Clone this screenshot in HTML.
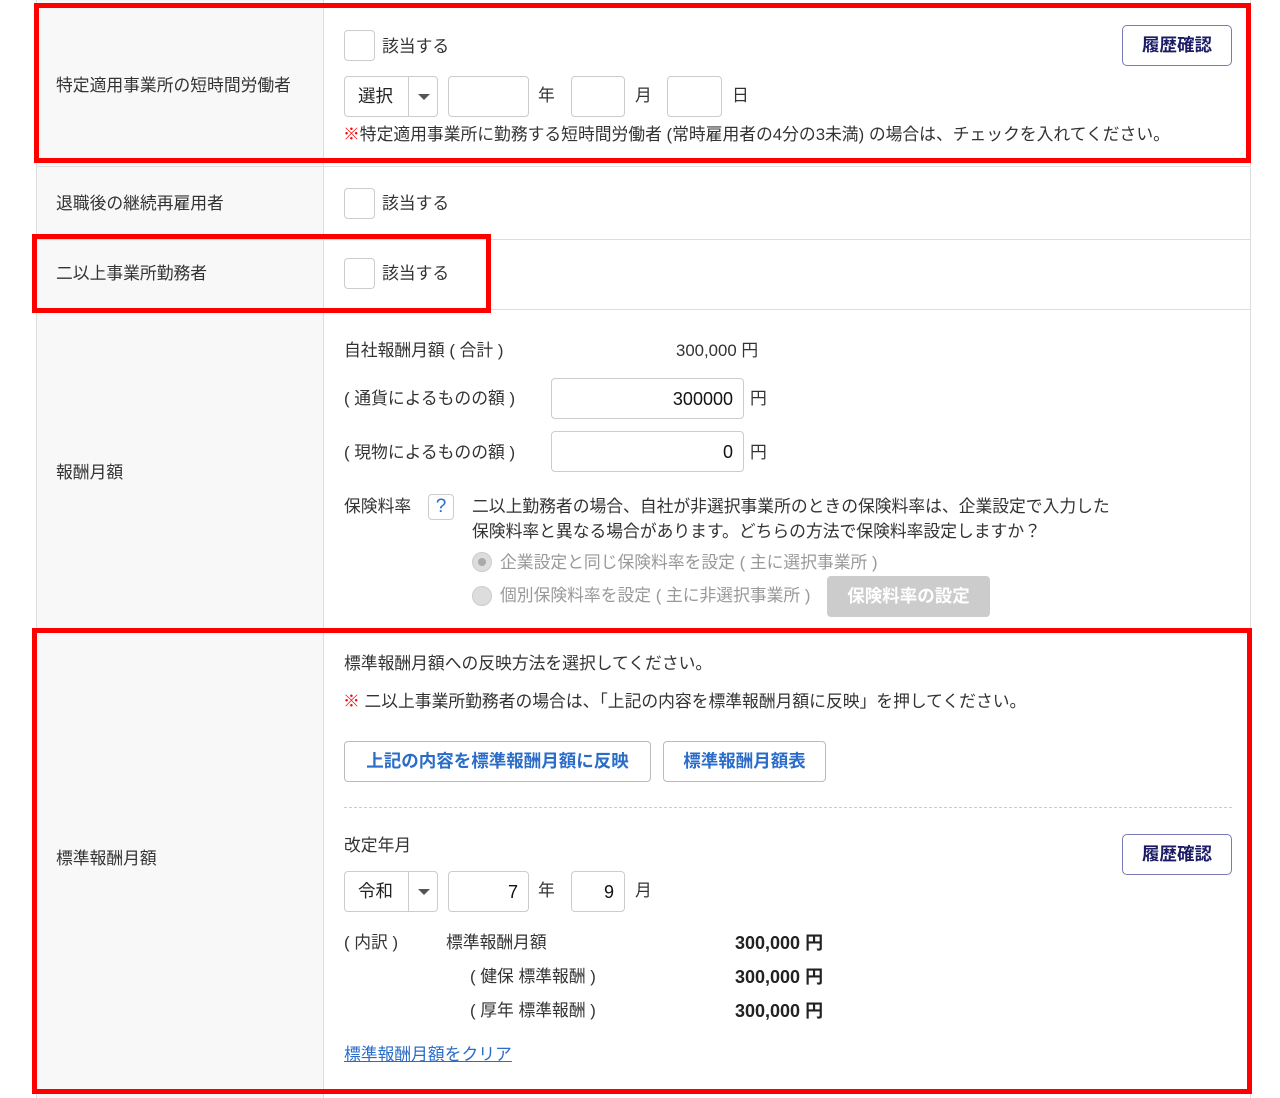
<!DOCTYPE html>
<html><head><meta charset="utf-8"><style>
*{box-sizing:border-box;margin:0;padding:0}
body{width:1280px;height:1098px;background:#fff;position:relative;overflow:hidden;font-family:"Liberation Sans","Noto Sans CJK JP",sans-serif;color:#333;font-size:16.8px}
.a{position:absolute;white-space:nowrap;line-height:20px;margin-top:2px}
.box{position:absolute;border:1px solid #ccc;border-radius:4px;background:#fff}
.hl{position:absolute;left:36px;width:1215px;height:1px;background:#ddd}
.red{position:absolute;border:5px solid #f00}
.num{text-align:right;padding-right:10px;font-size:18px;line-height:40px;color:#111}
.sel{position:absolute;border:1px solid #ccc;border-radius:4px;background:#fff;width:94px;height:41px}
.sel span{position:absolute;left:13px;top:8px;font-size:17.5px;line-height:22px;color:#222}
.sel i{position:absolute;left:63px;top:0;width:1px;height:39px;background:#ccc}
.sel b{position:absolute;left:73px;top:17px;border-left:6px solid transparent;border-right:6px solid transparent;border-top:6px solid #555}
.btn{position:absolute;border:1px solid #bbb;border-radius:4px;background:#fff;color:#2a6cc8;font-weight:bold;font-size:17.5px;text-align:center;line-height:38px}
.hist{position:absolute;border:1.5px solid #7a7ab8;border-radius:5px;background:#fff;color:#1b1b66;font-weight:bold;font-size:17.5px;text-align:center;line-height:38px;width:110px;height:41px;left:1122px}
.radio{position:absolute;width:20px;height:20px;border-radius:50%;background:#ddd;border:1px solid #ccc}
.v{font-weight:bold;font-size:18px;color:#222}
</style></head><body>
<div style="position:absolute;left:36px;top:0;width:287px;height:1098px;background:#f8f8f8"></div>
<div style="position:absolute;left:36px;top:0;width:1px;height:1098px;background:#ddd"></div>
<div style="position:absolute;left:323px;top:0;width:1px;height:1098px;background:#ddd"></div>
<div style="position:absolute;left:1250px;top:0;width:1px;height:1098px;background:#ddd"></div>
<div class="hl" style="top:166px"></div>
<div class="hl" style="top:239px"></div>
<div class="hl" style="top:309px"></div>
<div class="hl" style="top:629px"></div>

<div class="a" style="left:56px;top:74px">特定適用事業所の短時間労働者</div>
<div class="a" style="left:56px;top:192px">退職後の継続再雇用者</div>
<div class="a" style="left:56px;top:262px">二以上事業所勤務者</div>
<div class="a" style="left:56px;top:461px">報酬月額</div>
<div class="a" style="left:56px;top:847px">標準報酬月額</div>

<!-- row1 -->
<div class="box" style="left:344px;top:30px;width:31px;height:31px"></div>
<div class="a" style="left:382px;top:35px">該当する</div>
<div class="hist" style="top:25px">履歴確認</div>
<div class="sel" style="left:344px;top:76px"><span>選択</span><i></i><b></b></div>
<div class="box" style="left:448px;top:76px;width:81px;height:41px"></div>
<div class="a" style="left:538px;top:84px">年</div>
<div class="box" style="left:571px;top:76px;width:54px;height:41px"></div>
<div class="a" style="left:635px;top:84px">月</div>
<div class="box" style="left:667px;top:76px;width:55px;height:41px"></div>
<div class="a" style="left:732px;top:84px">日</div>
<div class="a" style="left:343px;top:123px"><span style="color:#f00">※</span>特定適用事業所に勤務する短時間労働者 (常時雇用者の4分の3未満) の場合は、チェックを入れてください。</div>

<!-- row2,3 -->
<div class="box" style="left:344px;top:188px;width:31px;height:31px"></div>
<div class="a" style="left:382px;top:192px">該当する</div>
<div class="box" style="left:344px;top:258px;width:31px;height:31px"></div>
<div class="a" style="left:382px;top:262px">該当する</div>

<!-- row4 -->
<div class="a" style="left:344px;top:339px">自社報酬月額 ( 合計 )</div>
<div class="a" style="left:676px;top:339px">300,000 円</div>
<div class="a" style="left:344px;top:387px">( 通貨によるものの額 )</div>
<div class="box num" style="left:551px;top:378px;width:193px;height:41px">300000</div>
<div class="a" style="left:750px;top:387px">円</div>
<div class="a" style="left:344px;top:441px">( 現物によるものの額 )</div>
<div class="box num" style="left:551px;top:431px;width:193px;height:41px">0</div>
<div class="a" style="left:750px;top:441px">円</div>
<div class="a" style="left:344px;top:495px">保険料率</div>
<div class="box" style="left:428px;top:494px;width:26px;height:26px;color:#2a6cc8;font-size:19px;text-align:center;line-height:24px">?</div>
<div class="a" style="left:472px;top:495px">二以上勤務者の場合、自社が非選択事業所のときの保険料率は、企業設定で入力した</div>
<div class="a" style="left:472px;top:520px">保険料率と異なる場合があります。どちらの方法で保険料率設定しますか？</div>
<div class="radio" style="left:472px;top:552px"><div style="position:absolute;left:5px;top:5px;width:8px;height:8px;border-radius:50%;background:#aaa"></div></div>
<div class="a" style="left:500px;top:551px;color:#999">企業設定と同じ保険料率を設定 ( 主に選択事業所 )</div>
<div class="radio" style="left:472px;top:586px"></div>
<div class="a" style="left:500px;top:584px;color:#999">個別保険料率を設定 ( 主に非選択事業所 )</div>
<div style="position:absolute;left:827px;top:576px;width:163px;height:41px;background:#ccc;border-radius:4px;color:#fff;font-weight:bold;font-size:17.5px;text-align:center;line-height:41px">保険料率の設定</div>

<!-- row5 -->
<div class="a" style="left:344px;top:652px">標準報酬月額への反映方法を選択してください。</div>
<div class="a" style="left:343px;top:690px"><span style="color:#f00">※</span> 二以上事業所勤務者の場合は、「上記の内容を標準報酬月額に反映」を押してください。</div>
<div class="btn" style="left:344px;top:741px;width:307px;height:41px">上記の内容を標準報酬月額に反映</div>
<div class="btn" style="left:663px;top:741px;width:163px;height:41px">標準報酬月額表</div>
<div style="position:absolute;left:344px;top:807px;width:888px;border-top:1px dashed #ccc"></div>
<div class="a" style="left:344px;top:834px">改定年月</div>
<div class="hist" style="top:834px">履歴確認</div>
<div class="sel" style="left:344px;top:871px"><span>令和</span><i></i><b></b></div>
<div class="box num" style="left:448px;top:871px;width:81px;height:41px">7</div>
<div class="a" style="left:538px;top:879px">年</div>
<div class="box num" style="left:571px;top:871px;width:54px;height:41px">9</div>
<div class="a" style="left:635px;top:879px">月</div>
<div class="a" style="left:344px;top:931px">( 内訳 )</div>
<div class="a" style="left:446px;top:931px">標準報酬月額</div>
<div class="a" style="left:470px;top:965px">( 健保 標準報酬 )</div>
<div class="a" style="left:470px;top:999px">( 厚年 標準報酬 )</div>
<div class="a v" style="left:735px;top:931px">300,000 円</div>
<div class="a v" style="left:735px;top:965px">300,000 円</div>
<div class="a v" style="left:735px;top:999px">300,000 円</div>
<div class="a" style="left:344px;top:1043px;color:#2a6cc8;text-decoration:underline">標準報酬月額をクリア</div>

<!-- red frames -->
<div class="red" style="left:34px;top:3px;width:1217px;height:160px"></div>
<div class="red" style="left:32px;top:234px;width:459px;height:79px"></div>
<div class="red" style="left:32px;top:628px;width:1220px;height:466px"></div>
</body></html>
